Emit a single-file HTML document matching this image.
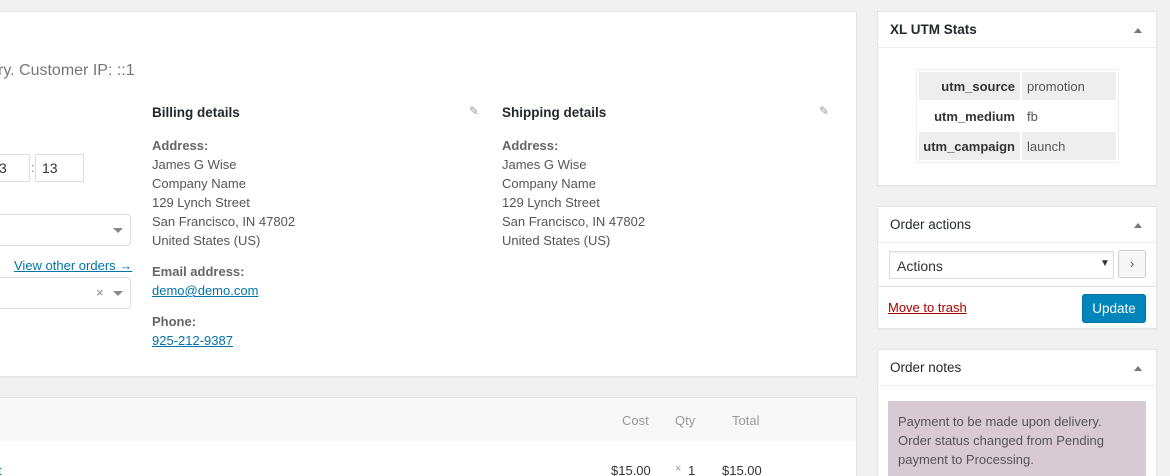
<!DOCTYPE html>
<html><head><meta charset="utf-8"><style>
*{box-sizing:border-box;margin:0;padding:0}
html,body{width:1170px;height:476px;overflow:hidden}
body{background:#f1f1f1;font-family:"Liberation Sans",sans-serif;font-size:13px;color:#555;position:relative}
.a{position:absolute;white-space:nowrap}
.box{position:absolute;background:#fff;border:1px solid #e5e5e5;box-shadow:0 1px 1px rgba(0,0,0,.04)}
h3{font-size:13.5px;font-weight:bold;color:#23282d}
.lnk{color:#0073aa;text-decoration:underline}
.tri{position:absolute;width:0;height:0;border-left:4px solid transparent;border-right:4px solid transparent;border-bottom:5px solid #72777c}
.sel{position:absolute;border:1px solid #ddd;border-radius:4px;background:#fff}
.dd{position:absolute;width:0;height:0;border-left:5px solid transparent;border-right:5px solid transparent;border-top:5px solid #888}
.addr div{line-height:19px}
</style></head><body>
<div class="box" style="left:-2px;top:11px;width:859px;height:366px"></div>
<div class="a" style="left:-2px;top:62px;font-size:16px;color:#777">ry. Customer IP: ::1</div>
<div class="a" style="left:-2px;top:154px;width:32px;height:28px;border:1px solid #ddd;background:#fff;font-size:14px;color:#333;padding:5px 0 0 0">3</div>
<div class="a" style="left:31px;top:160px;color:#888">:</div>
<div class="a" style="left:35px;top:154px;width:49px;height:28px;border:1px solid #ddd;background:#fff;font-size:14px;color:#333;padding:5px 0 0 6px">13</div>
<div class="sel" style="left:-6px;top:214px;width:137px;height:32px"></div>
<div class="dd" style="left:113px;top:228px"></div>
<div class="a lnk" style="left:14px;top:258px">View other orders →</div>
<div class="sel" style="left:-6px;top:277px;width:137px;height:32px"></div>
<div class="a" style="left:96px;top:285px;color:#888;font-size:13px">×</div>
<div class="dd" style="left:113px;top:291px"></div>

<div class="a" style="left:152px;top:105px"><h3>Billing details</h3></div>
<div class="a" style="left:469px;top:104px;color:#999;font-size:12px">✎</div>
<div class="a addr" style="left:152px;top:136px">
<div style="font-weight:bold;color:#666">Address:</div><div>James G Wise</div><div>Company Name</div><div>129 Lynch Street</div><div>San Francisco, IN 47802</div><div>United States (US)</div>
<div style="font-weight:bold;color:#666;margin-top:12px">Email address:</div><div class="lnk">demo@demo.com</div>
<div style="font-weight:bold;color:#666;margin-top:12px">Phone:</div><div class="lnk">925-212-9387</div>
</div>
<div class="a" style="left:502px;top:105px"><h3>Shipping details</h3></div>
<div class="a" style="left:819px;top:104px;color:#999;font-size:12px">✎</div>
<div class="a addr" style="left:502px;top:136px">
<div style="font-weight:bold;color:#666">Address:</div><div>James G Wise</div><div>Company Name</div><div>129 Lynch Street</div><div>San Francisco, IN 47802</div><div>United States (US)</div>
</div>

<div class="box" style="left:-2px;top:397px;width:859px;height:100px"></div>
<div class="a" style="left:-1px;top:398px;width:857px;height:43px;background:#f8f8f8"></div>
<div class="a" style="left:622px;top:413px;color:#999">Cost</div>
<div class="a" style="left:675px;top:413px;color:#999">Qty</div>
<div class="a" style="left:732px;top:413px;color:#999">Total</div>
<div class="a" style="left:-2px;top:463px;color:#0073aa">t</div>
<div class="a" style="left:611px;top:463px;color:#333">$15.00</div>
<div class="a" style="left:675px;top:463px;color:#999;font-size:11px">×</div>
<div class="a" style="left:688px;top:463px;color:#333">1</div>
<div class="a" style="left:722px;top:463px;color:#333">$15.00</div>

<div class="box" style="left:877px;top:11px;width:280px;height:175px"></div>
<div class="a" style="left:878px;top:47px;width:278px;height:1px;background:#eee"></div>
<div class="a" style="left:890px;top:22px"><h3>XL UTM Stats</h3></div>
<div class="tri" style="left:1134px;top:28px"></div>
<div class="a" style="left:916px;top:69px;width:203px;height:94px;border:1px solid #eee"></div>
<div class="a" style="left:919px;top:72px;width:101px;height:28px;background:#eee"></div>
<div class="a" style="left:1022px;top:72px;width:94px;height:28px;background:#eee"></div>
<div class="a" style="left:919px;top:132px;width:101px;height:28px;background:#eee"></div>
<div class="a" style="left:1022px;top:132px;width:94px;height:28px;background:#eee"></div>
<div class="a" style="left:919px;top:79px;width:96px;text-align:right;font-weight:bold;color:#333">utm_source</div>
<div class="a" style="left:919px;top:109px;width:96px;text-align:right;font-weight:bold;color:#333">utm_medium</div>
<div class="a" style="left:919px;top:139px;width:96px;text-align:right;font-weight:bold;color:#333">utm_campaign</div>
<div class="a" style="left:1027px;top:79px">promotion</div>
<div class="a" style="left:1027px;top:109px">fb</div>
<div class="a" style="left:1027px;top:139px">launch</div>

<div class="box" style="left:877px;top:206px;width:280px;height:123px"></div>
<div class="a" style="left:878px;top:242px;width:278px;height:1px;background:#eee"></div>
<div class="a" style="left:890px;top:217px"><h3 style="font-weight:normal">Order actions</h3></div>
<div class="tri" style="left:1134px;top:223px"></div>
<div class="a" style="left:889px;top:251px;width:225px;height:28px;border:1px solid #ddd;box-shadow:inset 0 1px 2px rgba(0,0,0,.07);padding:6px 0 0 7px;color:#333;font-size:14px">Actions</div>
<div class="a" style="left:1100px;top:258px;font-size:10px;color:#333">▼</div>
<div class="a" style="left:1118px;top:250px;width:28px;height:28px;border:1px solid #ccc;border-radius:3px;background:#f7f7f7;text-align:center;line-height:25px;color:#555">›</div>
<div class="a" style="left:878px;top:286px;width:278px;height:1px;background:#ddd"></div>
<div class="a" style="left:888px;top:300px;color:#a00;text-decoration:underline">Move to trash</div>
<div class="a" style="left:1082px;top:294px;width:64px;height:29px;background:#0085ba;border:1px solid #0073aa;border-radius:3px;color:#fff;text-align:center;line-height:27px;font-size:13.5px">Update</div>

<div class="box" style="left:877px;top:349px;width:280px;height:150px"></div>
<div class="a" style="left:878px;top:385px;width:278px;height:1px;background:#eee"></div>
<div class="a" style="left:890px;top:360px"><h3 style="font-weight:normal">Order notes</h3></div>
<div class="tri" style="left:1134px;top:366px"></div>
<div class="a" style="left:888px;top:401px;width:258px;height:90px;background:#d7cad2;padding:11px 10px;line-height:19px;color:#555;white-space:normal">Payment to be made upon delivery.<br>Order status changed from Pending<br>payment to Processing.</div>
</body></html>
